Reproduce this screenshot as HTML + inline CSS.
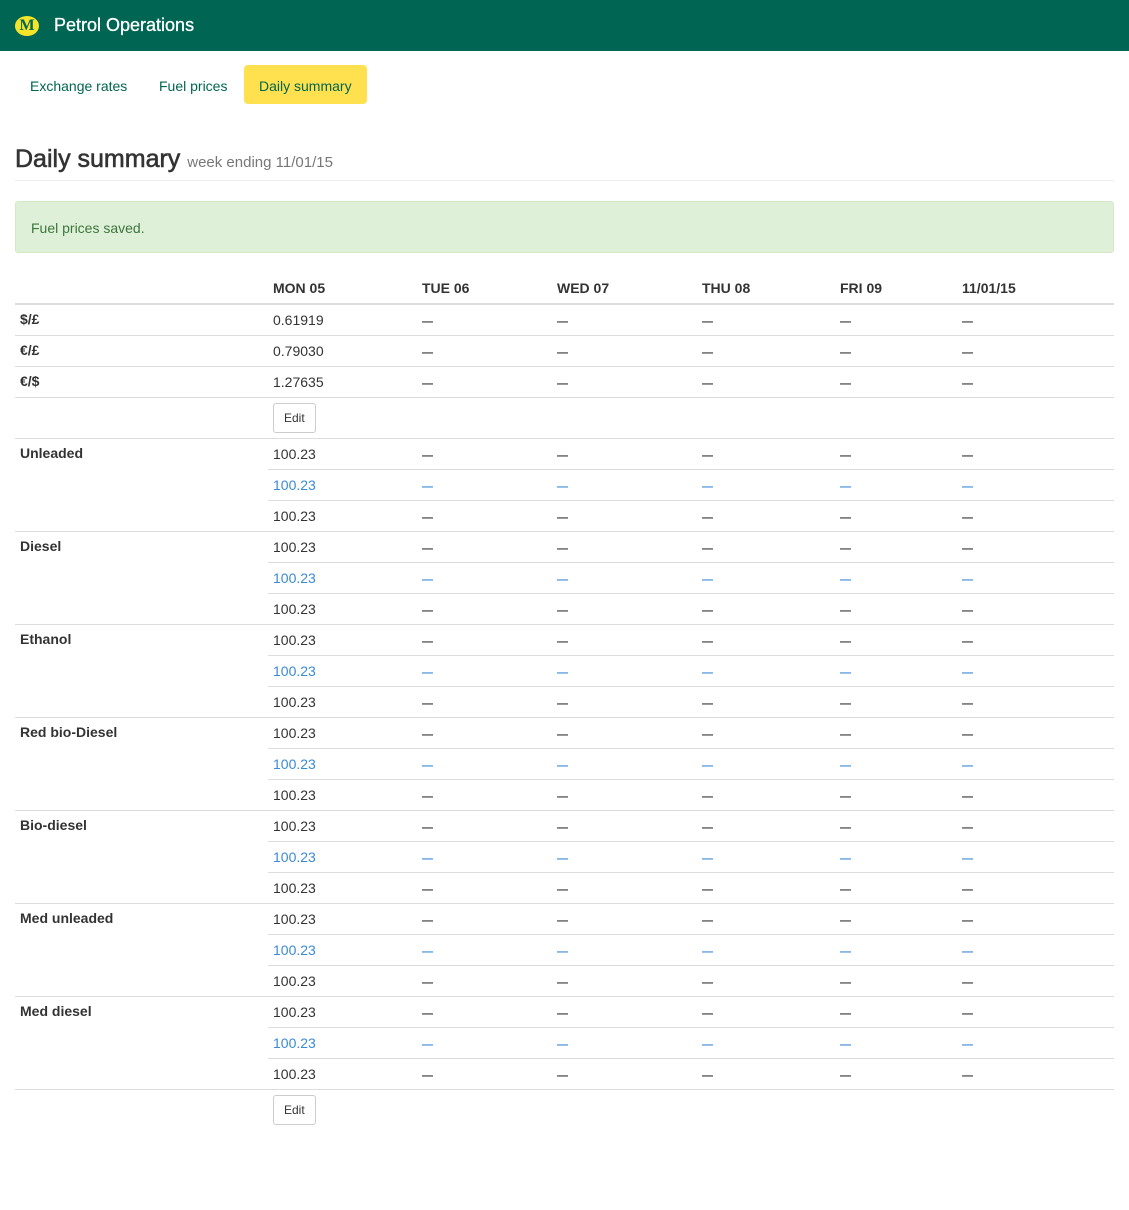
<!DOCTYPE html>
<html><head><meta charset="utf-8"><style>
body{margin:0;font-family:"Liberation Sans",Arial,sans-serif;font-size:14px;color:#333;background:#fff}
.top{height:51px;background:#006653;position:relative}
.logo{position:absolute;left:15px;top:16px;width:24px;height:20px;border-radius:50%;background:#f5e52a;color:#006653;font-family:"Liberation Serif",serif;font-weight:bold;font-size:16px;line-height:20px;text-align:center}
.title{position:absolute;left:54px;top:15px;color:#fff;font-size:18px;-webkit-text-stroke:.3px #fff}
.nav{position:absolute;top:65px;left:15px;height:39px}
.nav a{position:absolute;top:0;height:39px;line-height:42px;color:#00664f;text-decoration:none;font-size:14px;white-space:nowrap}
.nav a.act{background:#ffe04f;border-radius:4px;padding:0 15px}
h1{position:absolute;left:15px;top:145px;margin:0;font-size:25px;font-weight:normal;color:#333;-webkit-text-stroke:.6px #333}
h1 small{font-size:15px;color:#777;-webkit-text-stroke:0}
.hr{position:absolute;left:15px;width:1099px;top:180px;border-top:1px solid #eee}
.alert{position:absolute;left:15px;top:201px;width:1097px;height:50px;background:#dff0d8;border:1px solid #d6e9c6;border-radius:3px;color:#3c763d;line-height:52px;box-sizing:content-box}
.alert span{padding-left:15px}
table{position:absolute;left:15px;top:270px;width:1099px;border-collapse:collapse}
td,th{text-align:left;vertical-align:top;white-space:nowrap;box-sizing:border-box;line-height:20px}
th{height:34px;padding:8px 5px 0;border-bottom:2px solid #ddd;font-weight:bold}
td{height:31px;padding:5px 5px 0;border-top:1px solid #ddd}
td.l{font-weight:bold;padding-top:4px}
.b td{color:#3a8ad6}
td.d{font-size:11px;font-weight:bold;padding-top:7px}
.btn{display:inline-block;border:1px solid #ccc;border-radius:3px;height:30px;line-height:28px;padding:0 10px;font-size:12px;color:#333;box-sizing:border-box}
tr.e td{height:41px;padding-top:5px;line-height:normal}
</style></head><body>
<div class="top"><div class="logo">M</div><div class="title">Petrol Operations</div></div>
<div class="nav"><a style="left:15px">Exchange rates</a><a style="left:144px">Fuel prices</a><a class="act" style="left:229px">Daily summary</a></div>
<h1>Daily summary <small>week ending 11/01/15</small></h1>
<div class="hr"></div>
<div class="alert"><span>Fuel prices saved.</span></div>
<table>
<colgroup><col style="width:253px"><col style="width:149px"><col style="width:135px"><col style="width:145px"><col style="width:138px"><col style="width:122px"><col></colgroup>
<tr><th></th><th>MON 05</th><th>TUE 06</th><th>WED 07</th><th>THU 08</th><th>FRI 09</th><th>11/01/15</th></tr>
<tr><td class="l">$/£</td><td>0.61919</td><td class="d">—</td><td class="d">—</td><td class="d">—</td><td class="d">—</td><td class="d">—</td></tr>
<tr><td class="l">€/£</td><td>0.79030</td><td class="d">—</td><td class="d">—</td><td class="d">—</td><td class="d">—</td><td class="d">—</td></tr>
<tr><td class="l">€/$</td><td>1.27635</td><td class="d">—</td><td class="d">—</td><td class="d">—</td><td class="d">—</td><td class="d">—</td></tr>
<tr class="e"><td></td><td><span class="btn">Edit</span></td><td></td><td></td><td></td><td></td><td></td></tr>
<tr><td class="l" rowspan="3">Unleaded</td><td>100.23</td><td class="d">—</td><td class="d">—</td><td class="d">—</td><td class="d">—</td><td class="d">—</td></tr>
<tr class="b"><td>100.23</td><td class="d">—</td><td class="d">—</td><td class="d">—</td><td class="d">—</td><td class="d">—</td></tr>
<tr><td>100.23</td><td class="d">—</td><td class="d">—</td><td class="d">—</td><td class="d">—</td><td class="d">—</td></tr>
<tr><td class="l" rowspan="3">Diesel</td><td>100.23</td><td class="d">—</td><td class="d">—</td><td class="d">—</td><td class="d">—</td><td class="d">—</td></tr>
<tr class="b"><td>100.23</td><td class="d">—</td><td class="d">—</td><td class="d">—</td><td class="d">—</td><td class="d">—</td></tr>
<tr><td>100.23</td><td class="d">—</td><td class="d">—</td><td class="d">—</td><td class="d">—</td><td class="d">—</td></tr>
<tr><td class="l" rowspan="3">Ethanol</td><td>100.23</td><td class="d">—</td><td class="d">—</td><td class="d">—</td><td class="d">—</td><td class="d">—</td></tr>
<tr class="b"><td>100.23</td><td class="d">—</td><td class="d">—</td><td class="d">—</td><td class="d">—</td><td class="d">—</td></tr>
<tr><td>100.23</td><td class="d">—</td><td class="d">—</td><td class="d">—</td><td class="d">—</td><td class="d">—</td></tr>
<tr><td class="l" rowspan="3">Red bio-Diesel</td><td>100.23</td><td class="d">—</td><td class="d">—</td><td class="d">—</td><td class="d">—</td><td class="d">—</td></tr>
<tr class="b"><td>100.23</td><td class="d">—</td><td class="d">—</td><td class="d">—</td><td class="d">—</td><td class="d">—</td></tr>
<tr><td>100.23</td><td class="d">—</td><td class="d">—</td><td class="d">—</td><td class="d">—</td><td class="d">—</td></tr>
<tr><td class="l" rowspan="3">Bio-diesel</td><td>100.23</td><td class="d">—</td><td class="d">—</td><td class="d">—</td><td class="d">—</td><td class="d">—</td></tr>
<tr class="b"><td>100.23</td><td class="d">—</td><td class="d">—</td><td class="d">—</td><td class="d">—</td><td class="d">—</td></tr>
<tr><td>100.23</td><td class="d">—</td><td class="d">—</td><td class="d">—</td><td class="d">—</td><td class="d">—</td></tr>
<tr><td class="l" rowspan="3">Med unleaded</td><td>100.23</td><td class="d">—</td><td class="d">—</td><td class="d">—</td><td class="d">—</td><td class="d">—</td></tr>
<tr class="b"><td>100.23</td><td class="d">—</td><td class="d">—</td><td class="d">—</td><td class="d">—</td><td class="d">—</td></tr>
<tr><td>100.23</td><td class="d">—</td><td class="d">—</td><td class="d">—</td><td class="d">—</td><td class="d">—</td></tr>
<tr><td class="l" rowspan="3">Med diesel</td><td>100.23</td><td class="d">—</td><td class="d">—</td><td class="d">—</td><td class="d">—</td><td class="d">—</td></tr>
<tr class="b"><td>100.23</td><td class="d">—</td><td class="d">—</td><td class="d">—</td><td class="d">—</td><td class="d">—</td></tr>
<tr><td>100.23</td><td class="d">—</td><td class="d">—</td><td class="d">—</td><td class="d">—</td><td class="d">—</td></tr>
<tr class="e"><td></td><td><span class="btn">Edit</span></td><td></td><td></td><td></td><td></td><td></td></tr>
</table>
</body></html>
